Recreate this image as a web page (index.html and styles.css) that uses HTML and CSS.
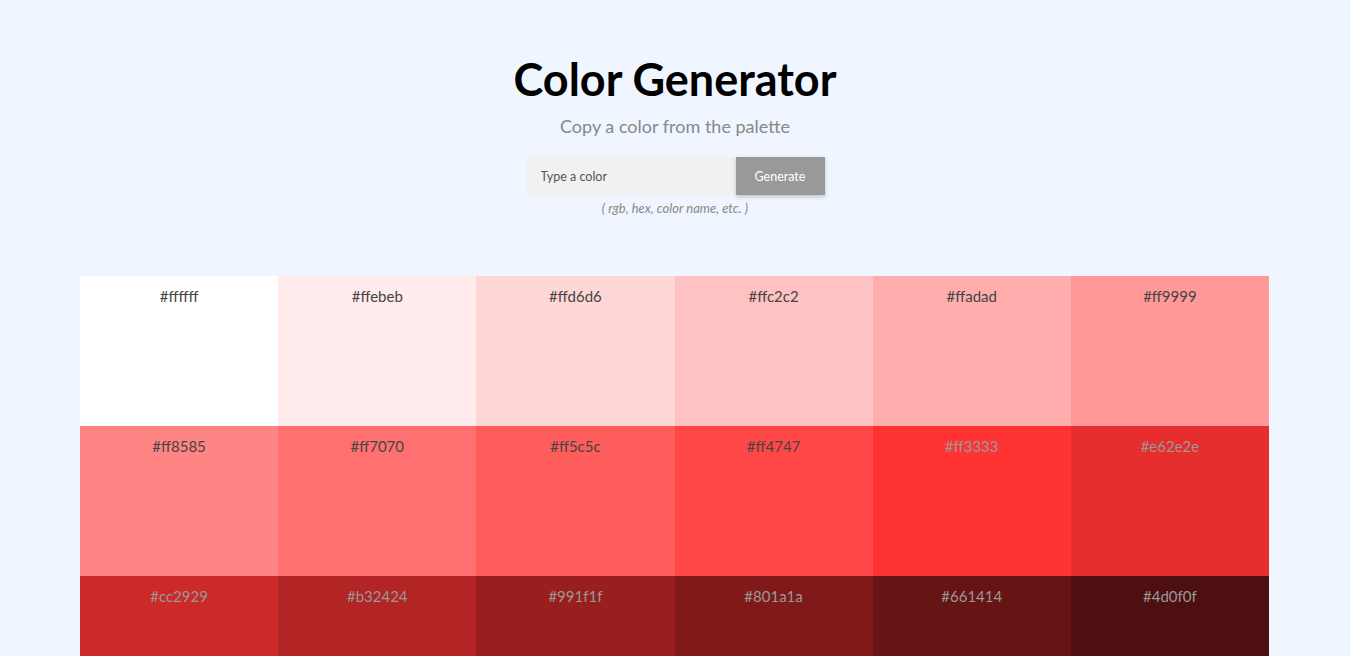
FILE: index.html
```html
<!DOCTYPE html>
<html lang="en">
<head>
<meta charset="utf-8">
<title>Color Generator</title>
<link rel="stylesheet" href="styles.css">
</head>
<body>
<header class="hero">
  <h1 class="title">Color Generator</h1>
  <p class="subtitle">Copy a color from the palette</p>
  <form class="form">
    <input class="input" type="text" placeholder="Type a color">
    <button class="btn" type="button">Generate</button>
  </form>
  <p class="hint">( rgb, hex, color name, etc. )</p>
</header>
<main class="palette">
  <div class="swatch" style="background:#ffffff">#ffffff</div>
  <div class="swatch" style="background:#ffebeb">#ffebeb</div>
  <div class="swatch" style="background:#ffd6d6">#ffd6d6</div>
  <div class="swatch" style="background:#ffc2c2">#ffc2c2</div>
  <div class="swatch" style="background:#ffadad">#ffadad</div>
  <div class="swatch" style="background:#ff9999">#ff9999</div>
  <div class="swatch" style="background:#ff8585">#ff8585</div>
  <div class="swatch" style="background:#ff7070">#ff7070</div>
  <div class="swatch" style="background:#ff5c5c">#ff5c5c</div>
  <div class="swatch" style="background:#ff4747">#ff4747</div>
  <div class="swatch dark" style="background:#ff3333">#ff3333</div>
  <div class="swatch dark" style="background:#e62e2e">#e62e2e</div>
  <div class="swatch dark" style="background:#cc2929">#cc2929</div>
  <div class="swatch dark" style="background:#b32424">#b32424</div>
  <div class="swatch dark" style="background:#991f1f">#991f1f</div>
  <div class="swatch dark" style="background:#801a1a">#801a1a</div>
  <div class="swatch dark" style="background:#661414">#661414</div>
  <div class="swatch dark" style="background:#4d0f0f">#4d0f0f</div>
</main>
</body>
</html>
```

FILE: styles.css
```css
html, body {
  margin: 0;
  padding: 0;
}
body {
  background: #eff6ff;
  font-family: "Lato", "Open Sans", sans-serif;
  color: #222;
}
.hero {
  display: flex;
  flex-direction: column;
  align-items: center;
  padding-top: 52px;
}
.title {
  margin: 0;
  font-size: 45px;
  font-weight: 700;
  line-height: 54px;
  color: #000;
}
.subtitle {
  margin: 8px 0 0;
  font-size: 18px;
  line-height: 24px;
  color: #888;
}
.form {
  display: flex;
  margin-top: 19px;
}
.input {
  width: 210px;
  height: 38px;
  box-sizing: border-box;
  border: none;
  background: #f1f1f1;
  padding: 0 15px;
  font-family: inherit;
  font-size: 12.5px;
  color: #333;
  outline: none;
}
.input::placeholder {
  color: #555;
}
.btn {
  width: 89px;
  height: 38px;
  border: none;
  background: #999;
  color: #fff;
  font-family: inherit;
  font-size: 12.5px;
  box-shadow: 0 2px 4px rgba(0,0,0,0.2);
  cursor: pointer;
}
.hint {
  margin: 5px 0 0;
  font-size: 13px;
  font-style: italic;
  color: #888;
}
.palette {
  width: 1189px;
  margin: 60px 0 0 80px;
  display: grid;
  grid-template-columns: repeat(6, 1fr);
  grid-auto-rows: 150px;
}
.swatch {
  text-align: center;
  padding-top: 11px;
  font-size: 15px;
  color: #444;
}
.swatch.dark {
  color: #999;
}
```
